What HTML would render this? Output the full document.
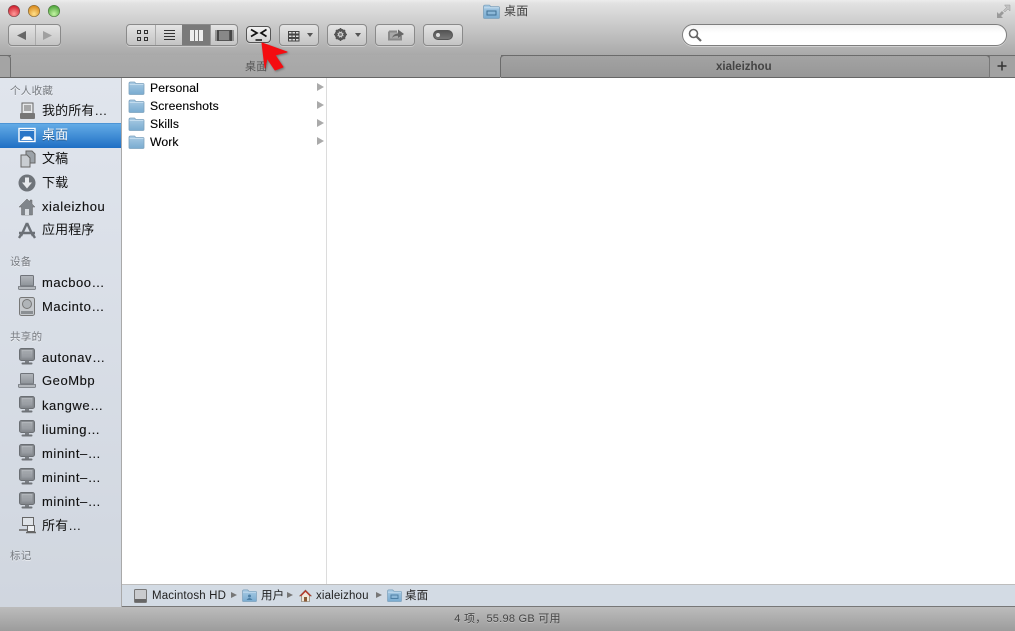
<!DOCTYPE html>
<html><head><meta charset="utf-8"><style>
html,body{margin:0;padding:0;width:1015px;height:631px;overflow:hidden;background:#fff}
*{box-sizing:border-box}
body{font-family:"Liberation Sans","Noto Sans CJK SC",sans-serif;font-size:12px;position:relative}
.a{position:absolute}
.top{left:0;top:0;width:1015px;height:55px;background:linear-gradient(#ececec,#e2e2e2 6%,#a9a9a9)}
.tabs{left:0;top:55px;width:1015px;height:23px;background:#a2a2a2;border-top:1px solid #6e6e6e;border-bottom:1px solid #666}
.btn{position:absolute;top:24px;height:22px;border:1px solid #8a8a8a;border-radius:4px;background:linear-gradient(#e4e4e4,#c4c4c4);box-shadow:0 1px 0 rgba(255,255,255,.35)}
.side{left:0;top:78px;width:122px;height:529px;background:linear-gradient(#e0e5ed,#d0d6df);border-right:1px solid #a9a9a9}
.h{position:absolute;left:10px;font-size:10.5px;color:#75797f;line-height:13px;text-shadow:0 1px 0 rgba(255,255,255,.6);letter-spacing:.3px}
.i{position:absolute;left:42px;color:#111;line-height:16px;font-size:13px;letter-spacing:.1px;white-space:nowrap}
.l{letter-spacing:.55px;-webkit-text-stroke:.12px #111}
.sel{left:0;top:123px;width:121px;height:25px;background:linear-gradient(#63abe6,#1f6fc4);border-top:1px solid #4d95d6}
.f{position:absolute;left:150px;color:#000;line-height:16px;font-size:12.2px;letter-spacing:.1px;-webkit-text-stroke:.12px #000}
.arr{position:absolute;left:317px;width:0;height:0;border-left:7px solid #aaa;border-top:4px solid transparent;border-bottom:4px solid transparent}
.ic{position:absolute}
.path{left:122px;top:584px;width:893px;height:23px;background:#d3dbe4;border-top:1px solid #bdbdbd;border-bottom:1px solid #777}
.pt{position:absolute;top:589px;line-height:14px;font-size:11.5px;color:#222;white-space:nowrap;letter-spacing:.15px}
.pa{position:absolute;top:592px;width:0;height:0;border-left:6px solid #777;border-top:3.5px solid transparent;border-bottom:3.5px solid transparent}
.bot{left:0;top:607px;width:1015px;height:24px;background:linear-gradient(#bcbcbc,#9c9c9c);text-align:center;color:#444;font-size:11px;line-height:24px;letter-spacing:.25px;text-shadow:0 1px 0 rgba(255,255,255,.3)}
</style></head><body>
<svg width="0" height="0" style="position:absolute"><defs>
<linearGradient id="fg" x1="0" y1="0" x2="0" y2="1"><stop offset="0" stop-color="#a9cbe4"/><stop offset="1" stop-color="#79abd0"/></linearGradient>
<linearGradient id="mg" x1="0" y1="0" x2="0" y2="1"><stop offset="0" stop-color="#b4b8bd"/><stop offset="1" stop-color="#8d9298"/></linearGradient>
<symbol id="folder" viewBox="0 0 16 14"><path d="M.5 2.500Q.5 1 2 1H6L7.500 2.500H14.500Q15.500 2.500 15.500 3.500V12.500Q15.500 13.500 14.500 13.500H1.500Q.5 13.500 .5 12.500Z" fill="url(#fg)" stroke="#7ea2bd" stroke-width=".8"/><path d="M1 3.500H15" stroke="#c3dcee"/></symbol>
<symbol id="mon" viewBox="0 0 16 17"><rect x=".5" y=".5" width="15" height="12" rx="2" fill="#85898e" stroke="#6a6e73"/><rect x="2.500" y="2" width="11" height="8.500" fill="url(#mg)"/><path d="M3.500 4H12.500M3.500 6H12.500M3.500 8H12.500" stroke="#9a9ea3"/><rect x="6" y="12.500" width="4" height="2" fill="#7a7e83"/><rect x="2.500" y="14.500" width="11" height="2" rx="1" fill="#6f7378"/></symbol>
<symbol id="lap" viewBox="0 0 18 15"><rect x="2.500" y=".5" width="13" height="10.500" rx="1" fill="url(#mg)" stroke="#70747a"/><path d="M.5 11.500H17.500V13.500Q17.500 14.500 16.500 14.500H1.500Q.5 14.500 .5 13.500Z" fill="#b3b7bc" stroke="#70747a" stroke-width=".8"/></symbol>
</defs></svg>

<div class="a top"></div>
<svg class="a" style="left:7px;top:4px" width="56" height="14"><defs>
<radialGradient id="r" cx=".5" cy=".75" r=".7"><stop offset="0" stop-color="#ff9a9a"/><stop offset="1" stop-color="#cf1e2c"/></radialGradient>
<radialGradient id="y" cx=".5" cy=".75" r=".7"><stop offset="0" stop-color="#ffe08a"/><stop offset="1" stop-color="#d9881a"/></radialGradient>
<radialGradient id="g" cx=".5" cy=".75" r=".7"><stop offset="0" stop-color="#c4f5a4"/><stop offset="1" stop-color="#4ea43a"/></radialGradient></defs>
<circle cx="7" cy="7" r="5.700" fill="url(#r)" stroke="#7d4a4f" stroke-width=".7"/><circle cx="27" cy="7" r="5.700" fill="url(#y)" stroke="#856a3a" stroke-width=".7"/><circle cx="47" cy="7" r="5.700" fill="url(#g)" stroke="#4f7a45" stroke-width=".7"/></svg>
<svg class="ic" style="left:483px;top:4px" width="17" height="15"><use href="#folder" width="17" height="15"/><rect x="4" y="7" width="9" height="4" fill="none" stroke="#3f6f93"/></svg>
<div class="a" style="left:504px;top:4px;font-size:12px;line-height:15px;color:#444;letter-spacing:.3px">桌面</div>
<svg class="a" style="left:996px;top:4px" width="15" height="15"><path d="M1 14V8L3 10 6 7 8 9 5 12 7 14Z" fill="#9a9a9a"/><path d="M14 1V7L12 5 9 8 7.500 6.500 10.500 3.500 8.500 1Z" fill="#c2c2c2" stroke="#999" stroke-width=".5"/></svg>
<div class="btn" style="left:8px;width:53px"><div class="a" style="left:26px;top:0;width:1px;height:20px;background:#aaa"></div>
<svg class="a" style="left:0;top:0" width="51" height="20"><path d="M8 10.500L17 6V15Z" fill="#666"/><path d="M43 10.500L34 6V15Z" fill="#a0a0a0"/></svg></div>
<div class="btn" style="left:126px;width:112px"><svg class="a" style="left:0;top:0" width="110" height="20">
<rect x="55" y="-1" width="28" height="22" fill="#7a7a7a"/>
<path d="M28.500 0V20" stroke="#aaa"/><path d="M83.500 0V20" stroke="#999"/>
<g fill="none" stroke="#333"><rect x="10.500" y="5.500" width="3" height="3"/><rect x="17.500" y="5.500" width="3" height="3"/><rect x="10.500" y="12.500" width="3" height="3"/><rect x="17.500" y="12.500" width="3" height="3"/></g>
<path d="M37 5.500H48M37 8.500H48M37 11.500H48M37 14.500H48" stroke="#333"/>
<rect x="63.500" y="5.500" width="12" height="10" fill="#eee" stroke="#eee"/><path d="M67.500 5V16M71.500 5V16" stroke="#777"/>
<rect x="90" y="5" width="15" height="11" fill="#555"/><rect x="92" y="6" width="10" height="9" fill="#888"/><path d="M89 5V16M91 5V16M104 5V16M106 5V16" stroke="#333" stroke-width=".8"/>
</svg></div>
<div class="btn" style="left:246px;width:25px;height:17px;top:26px;background:linear-gradient(#f2f2f2,#d2d2d2);border-color:#555"><svg class="a" style="left:0;top:0" width="23" height="15"><path d="M4 2.500L10 6 4 9.500M19.500 2.500L14 6 19.500 9.500" fill="none" stroke="#111" stroke-width="1.700"/><path d="M8.500 13H15" stroke="#111" stroke-width="1.500"/></svg></div>
<div class="btn" style="left:279px;width:40px"><svg class="a" style="left:0;top:0" width="38" height="20"><g fill="#ddd" stroke="#444"><rect x="8.500" y="6.500" width="3.500" height="2.500"/><rect x="12" y="6.500" width="3.500" height="2.500"/><rect x="15.500" y="6.500" width="3.500" height="2.500"/><rect x="8.500" y="10" width="3.500" height="2.500"/><rect x="12" y="10" width="3.500" height="2.500"/><rect x="15.500" y="10" width="3.500" height="2.500"/><rect x="8.500" y="13.500" width="3.500" height="2.500"/><rect x="12" y="13.500" width="3.500" height="2.500"/><rect x="15.500" y="13.500" width="3.500" height="2.500"/></g><path d="M27 8H33L30 12Z" fill="#555"/></svg></div>
<div class="btn" style="left:327px;width:40px"><svg class="a" style="left:0;top:0" width="38" height="20"><circle cx="12.500" cy="9.500" r="4.500" fill="none" stroke="#555" stroke-width="2.400"/><path d="M12.500 3V16M6 9.500H19M8 5L17 14M17 5L8 14" stroke="#555" stroke-width="1.500"/><circle cx="12.500" cy="9.500" r="2.600" fill="#cfcfcf"/><circle cx="12.500" cy="9.500" r="1.400" fill="#777"/><path d="M27 8H33L30 12Z" fill="#555"/></svg></div>
<div class="btn" style="left:375px;width:40px"><svg class="a" style="left:0;top:0" width="38" height="20"><path d="M13 6.500H21M13 6.500V14.500H25V11" fill="none" stroke="#8a8a8a" stroke-width="2"/><rect x="14" y="7.500" width="10" height="6" fill="#a8a8a8"/><path d="M16 13Q17 9 22 8.500V4.500L28 9 22 13V10.800Q18 10.800 16 13Z" fill="#666"/></svg></div>
<div class="btn" style="left:423px;width:40px"><div class="a" style="left:9px;top:5px;width:20px;height:10px;border-radius:5px;background:linear-gradient(#555,#777);border:1px solid #555"></div><div class="a" style="left:12px;top:8px;width:4px;height:4px;border-radius:2px;background:#ddd"></div></div>
<div class="a" style="left:682px;top:24px;width:325px;height:22px;border-radius:11px;border:1px solid #7e7e7e;background:linear-gradient(#f2f2f2,#fff 40%);box-shadow:0 1px 0 rgba(255,255,255,.4)"></div>
<svg class="a" style="left:687px;top:27px" width="16" height="16"><circle cx="6.500" cy="6.500" r="4" fill="none" stroke="#666" stroke-width="1.600"/><path d="M9.500 9.500L14 14" stroke="#666" stroke-width="2.200"/></svg>
<div class="a tabs"></div>
<div class="a" style="left:11px;top:55px;width:490px;height:23px;background:linear-gradient(#ababab,#a6a6a6)"></div>
<div class="a" style="left:0;top:55px;width:11px;height:22px;background:#a4a4a4;border-right:1px solid #6e6e6e;border-top:1px solid #6e6e6e;border-radius:0 4px 0 0"></div>
<div class="a" style="left:500px;top:55px;width:490px;height:22px;background:linear-gradient(#a3a3a3,#979797);border:1px solid #6b6b6b;border-bottom:0;border-radius:4px 4px 0 0"></div>
<div class="a" style="left:989px;top:55px;width:26px;height:23px;background:#a2a2a2;border-top:1px solid #6e6e6e;border-bottom:1px solid #666;border-left:1px solid #777"></div>
<div class="a" style="left:11px;top:77px;width:489px;height:1px;background:#666"></div>
<div class="a" style="left:245px;top:60px;font-size:11px;line-height:14px;color:#555;letter-spacing:.2px">桌面</div>
<div class="a" style="left:716px;top:60px;font-size:11.500px;line-height:14px;color:#444;font-weight:bold">xialeizhou</div>
<svg class="a" style="left:996px;top:60px" width="12" height="12"><path d="M6 1.500V10.500M1.500 6H10.500" stroke="#333" stroke-width="1.500"/></svg>
<div class="a side"></div>
<div class="a sel"></div>
<div class="h" style="top:85px">个人收藏</div>
<div class="i" style="top:103px">我的所有…</div>
<svg class="ic" style="left:19px;top:102px" width="17" height="18"><rect x="3" y="1" width="11" height="11" fill="#e6e8ea" stroke="#666"/><path d="M5 4H12M5 6H12M5 8H12" stroke="#666"/><rect x="1" y="11" width="15" height="6" rx="1" fill="#777"/></svg>
<div class="i" style="top:127px;color:#fff;text-shadow:0 1px 0 rgba(0,0,0,.3)">桌面</div>
<svg class="ic" style="left:18px;top:127px" width="18" height="16"><rect x="1" y="1.500" width="16" height="13" fill="#2a76c7" stroke="#fff" stroke-width="1.400"/><path d="M3 13L6 9.500H12L15 13Z" fill="#fff"/><path d="M2 3.500H16" stroke="#cfe3f6"/></svg>
<div class="i" style="top:151px">文稿</div>
<svg class="ic" style="left:19px;top:150px" width="17" height="18"><path d="M7 1H13L16 4V13H7Z" fill="#9ca2a8" stroke="#666"/><path d="M2 5H8L11 8V17H2Z" fill="#c9cdd2" stroke="#666"/></svg>
<div class="i" style="top:175px">下载</div>
<svg class="ic" style="left:18px;top:174px" width="18" height="18"><circle cx="9" cy="9" r="8.500" fill="#6f747a"/><path d="M7 3.500H11V8.500H14L9 14.500 4 8.500H7Z" fill="#e8eaed"/></svg>
<div class="i l" style="top:199px">xialeizhou</div>
<svg class="ic" style="left:18px;top:198px" width="18" height="18"><path d="M9 1L1 9H3.500V17H14.500V9H17L14 6V2H12V4Z" fill="#80858b" stroke="#666" stroke-width=".5"/><path d="M7 11H11V17H7Z" fill="#d9dde2"/></svg>
<div class="i" style="top:222px">应用程序</div>
<svg class="ic" style="left:18px;top:221px" width="18" height="18"><path d="M9 2L3 15M9 2L15 15M1 12H17M1 17L4 12M17 17L14 12" fill="none" stroke="#6b7076" stroke-width="2.400"/></svg>
<div class="h" style="top:256px">设备</div>
<svg class="ic" style="left:18px;top:275px" width="18" height="15"><use href="#lap" width="18" height="15"/></svg>
<div class="i l" style="top:275px">macboo…</div>
<svg class="ic" style="left:19px;top:297px" width="16" height="19"><rect x=".5" y=".5" width="15" height="18" rx="2" fill="#c6c9cd" stroke="#777"/><circle cx="8" cy="7" r="4.500" fill="#b0b4b8" stroke="#777"/><path d="M2 14H14V17H2Z" fill="#8b8f93"/></svg>
<div class="i l" style="top:299px">Macinto…</div>
<div class="h" style="top:331px">共享的</div>
<svg class="ic" style="left:19px;top:348px" width="16" height="17"><use href="#mon" width="16" height="17"/></svg>
<div class="i l" style="top:350px">autonav…</div>
<svg class="ic" style="left:18px;top:373px" width="18" height="15"><use href="#lap" width="18" height="15"/></svg>
<div class="i l" style="top:373px">GeoMbp</div>
<svg class="ic" style="left:19px;top:396px" width="16" height="17"><use href="#mon" width="16" height="17"/></svg>
<div class="i l" style="top:398px">kangwe…</div>
<svg class="ic" style="left:19px;top:420px" width="16" height="17"><use href="#mon" width="16" height="17"/></svg>
<div class="i l" style="top:422px">liuming…</div>
<svg class="ic" style="left:19px;top:444px" width="16" height="17"><use href="#mon" width="16" height="17"/></svg>
<div class="i l" style="top:446px">minint–…</div>
<svg class="ic" style="left:19px;top:468px" width="16" height="17"><use href="#mon" width="16" height="17"/></svg>
<div class="i l" style="top:470px">minint–…</div>
<svg class="ic" style="left:19px;top:492px" width="16" height="17"><use href="#mon" width="16" height="17"/></svg>
<div class="i l" style="top:494px">minint–…</div>
<svg class="ic" style="left:18px;top:517px" width="18" height="17"><rect x="4.500" y=".5" width="11" height="8" fill="#dfe3e8" stroke="#666"/><path d="M1 13H10M8 15.500H18" stroke="#666" stroke-width="1.500"/><rect x="9.500" y="8.500" width="7" height="6" fill="#eef0f3" stroke="#666"/></svg>
<div class="i" style="top:518px">所有…</div>
<div class="h" style="top:550px">标记</div>
<div class="a" style="left:326px;top:78px;width:1px;height:506px;background:#dcdcdc"></div>
<svg class="ic" style="left:128px;top:81px" width="17" height="14"><use href="#folder" width="17" height="14"/></svg>
<svg class="ic" style="left:128px;top:99px" width="17" height="14"><use href="#folder" width="17" height="14"/></svg>
<svg class="ic" style="left:128px;top:117px" width="17" height="14"><use href="#folder" width="17" height="14"/></svg>
<svg class="ic" style="left:128px;top:135px" width="17" height="14"><use href="#folder" width="17" height="14"/></svg>
<div class="f" style="top:80px">Personal</div><div class="arr" style="top:83px"></div>
<div class="f" style="top:98px">Screenshots</div><div class="arr" style="top:101px"></div>
<div class="f" style="top:116px">Skills</div><div class="arr" style="top:119px"></div>
<div class="f" style="top:134px">Work</div><div class="arr" style="top:137px"></div>
<div class="a path"></div>
<svg class="ic" style="left:134px;top:589px" width="13" height="14"><rect x=".5" y=".5" width="12" height="13" rx="1" fill="#c9cbce" stroke="#777"/><rect x="1" y="10" width="11" height="3" fill="#666"/></svg>
<div class="pt" style="left:152px">Macintosh HD</div><div class="pa" style="left:231px"></div>
<svg class="ic" style="left:242px;top:589px" width="15" height="13"><use href="#folder" width="15" height="13"/><circle cx="7.500" cy="7" r="1.500" fill="#4d7fa5"/><path d="M4.500 11Q7.500 7 10.500 11Z" fill="#4d7fa5"/></svg>
<div class="pt" style="left:261px">用户</div><div class="pa" style="left:287px"></div>
<svg class="ic" style="left:299px;top:589px" width="13" height="13"><path d="M6.500 1L.5 7H2.500V12.500H10.500V7H12.500Z" fill="#efe8dc" stroke="#7a6a55" stroke-width=".6"/><path d="M6.500 1L.5 7H2.500L6.500 3 10.500 7H12.500Z" fill="#b5382c"/><rect x="5" y="8" width="3" height="4.500" fill="#8a5a35"/></svg>
<div class="pt" style="left:316px">xialeizhou</div><div class="pa" style="left:376px"></div>
<svg class="ic" style="left:387px;top:589px" width="15" height="13"><use href="#folder" width="15" height="13"/><rect x="4" y="6" width="7" height="3.500" fill="none" stroke="#4d7fa5"/></svg>
<div class="pt" style="left:405px">桌面</div>
<div class="a bot">4 项，55.98 GB 可用</div>
<svg class="a" style="left:255px;top:38px" width="38" height="38"><path d="M7 5L32 14 20 17 28 29 20 32 12 20 10 30Z" fill="#f40c10" stroke="#f40c10" stroke-linejoin="round" style="filter:drop-shadow(1px 1px 1px rgba(0,0,0,.35))"/></svg>
</body></html>
